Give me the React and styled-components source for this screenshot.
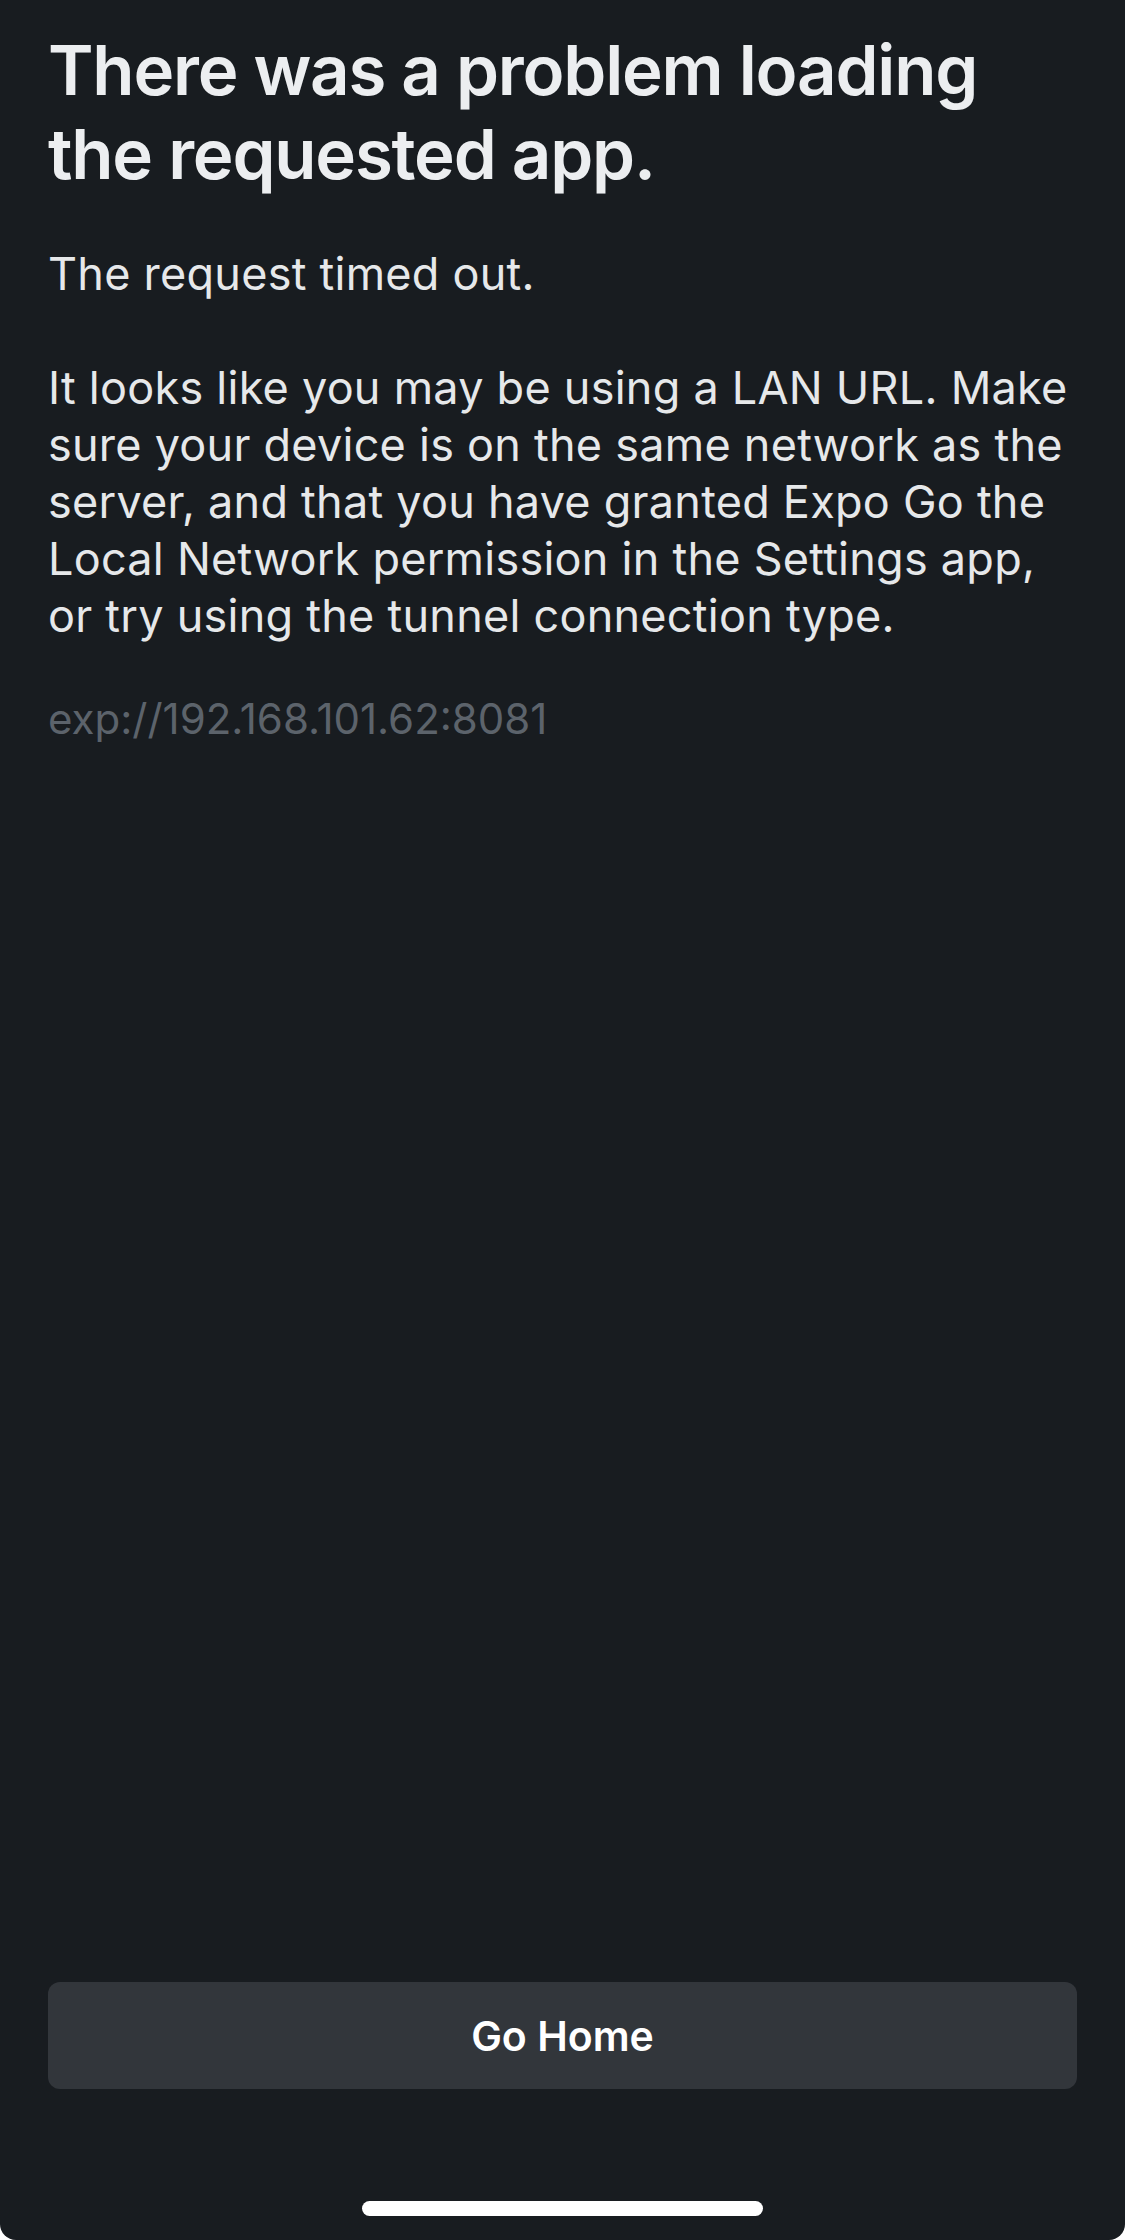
import React from 'react';
import styled, { createGlobalStyle } from 'styled-components';

const Global = createGlobalStyle`
  html, body {
    margin: 0;
    padding: 0;
    background: #ffffff;
  }
  #root {
    width: 1125px;
  }
`;

const Screen = styled.div`
  width: 1125px;
  height: 2240px;
  box-sizing: border-box;
  background: #181c20;
  border-radius: 0 0 16px 16px;
  display: flex;
  flex-direction: column;
  padding: 28px 48px 0 48px;
  font-family: Inter, "Noto Sans", sans-serif;
`;

const Title = styled.h1`
  margin: 0;
  font-size: 69px;
  line-height: 84px;
  font-weight: 600;
  color: #eceef0;
  letter-spacing: -1.2px;
`;

const Message = styled.p`
  margin: 49px 0 0 0;
  font-size: 45px;
  line-height: 57px;
  font-weight: 400;
  color: #e6e8ea;
  letter-spacing: 0.25px;
  white-space: pre-line;
`;

const Url = styled.div`
  margin-top: 49px;
  font-size: 42px;
  line-height: 52px;
  color: #5c636b;
`;

const Footer = styled.div`
  margin-top: auto;
  display: flex;
  flex-direction: column;
  align-items: center;
  padding-bottom: 24px;
`;

const HomeButton = styled.button`
  width: 100%;
  height: 107px;
  border: none;
  border-radius: 12px;
  background: #32363b;
  color: #ffffff;
  font-family: inherit;
  font-size: 41px;
  font-weight: 600;
  cursor: pointer;
`;

const Indicator = styled.div`
  margin-top: 112px;
  width: 401px;
  height: 15px;
  border-radius: 8px;
  background: #ffffff;
`;

const App = () => {
  return (
    <>
      <Global />
      <Screen>
        <Title>There was a problem loading the requested app.</Title>
        <Message>
          {'The request timed out.\n\nIt looks like you may be using a LAN URL. Make sure your device is on the same network as the server, and that you have granted Expo Go the Local Network permission in the Settings app, or try using the tunnel connection type.'}
        </Message>
        <Url>exp://192.168.101.62:8081</Url>
        <Footer>
          <HomeButton>Go Home</HomeButton>
          <Indicator />
        </Footer>
      </Screen>
    </>
  );
};

export default App;
